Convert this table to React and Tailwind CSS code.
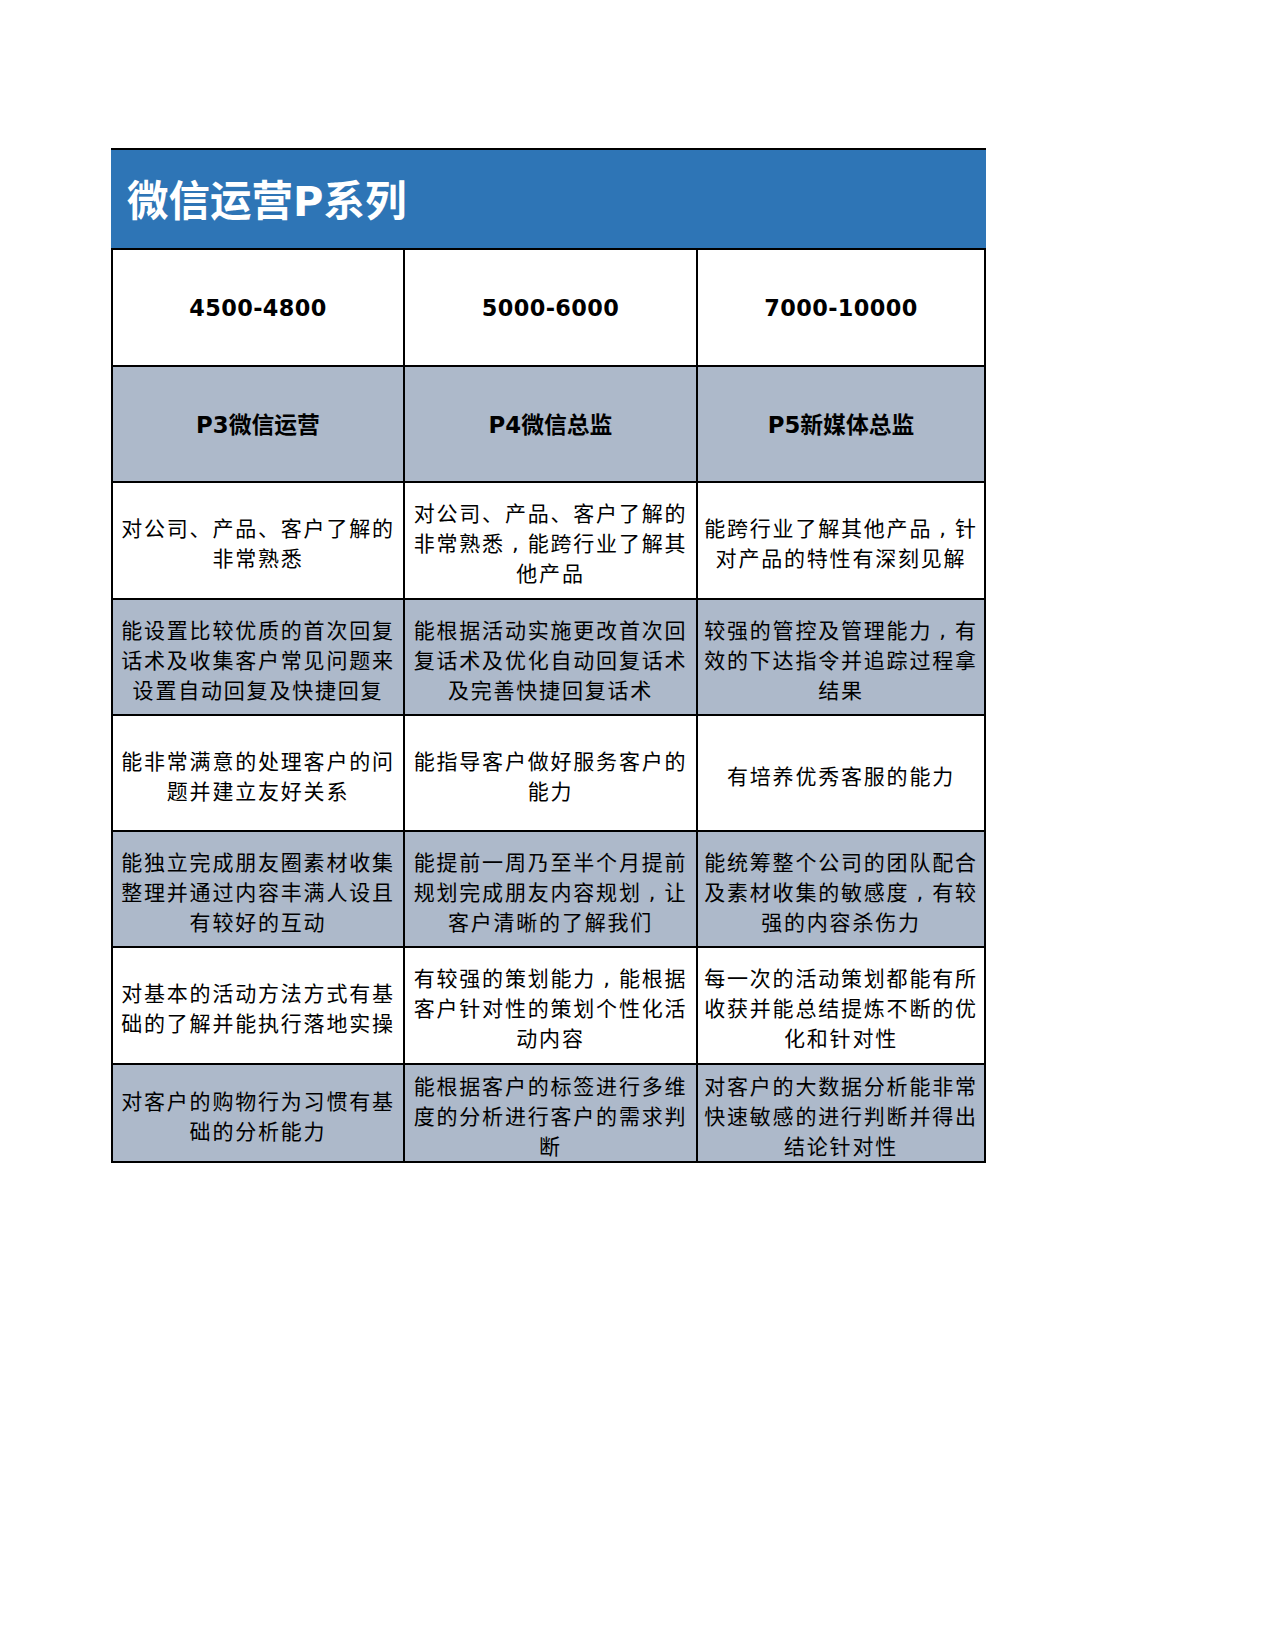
import React from "react";

const FONT = { fontFamily: '"DejaVu Sans","Noto Sans CJK SC",sans-serif' };

const salaries = ["4500-4800", "5000-6000", "7000-10000"];
const roles = ["P3微信运营", "P4微信总监", "P5新媒体总监"];

const rows = [
  [
    ["对公司、产品、客户了解的", "非常熟悉"],
    ["对公司、产品、客户了解的", "非常熟悉，能跨行业了解其", "他产品"],
    ["能跨行业了解其他产品，针", "对产品的特性有深刻见解"],
  ],
  [
    ["能设置比较优质的首次回复", "话术及收集客户常见问题来", "设置自动回复及快捷回复"],
    ["能根据活动实施更改首次回", "复话术及优化自动回复话术", "及完善快捷回复话术"],
    ["较强的管控及管理能力，有", "效的下达指令并追踪过程拿", "结果"],
  ],
  [
    ["能非常满意的处理客户的问", "题并建立友好关系"],
    ["能指导客户做好服务客户的", "能力"],
    ["有培养优秀客服的能力"],
  ],
  [
    ["能独立完成朋友圈素材收集", "整理并通过内容丰满人设且", "有较好的互动"],
    ["能提前一周乃至半个月提前", "规划完成朋友内容规划，让", "客户清晰的了解我们"],
    ["能统筹整个公司的团队配合", "及素材收集的敏感度，有较", "强的内容杀伤力"],
  ],
  [
    ["对基本的活动方法方式有基", "础的了解并能执行落地实操"],
    ["有较强的策划能力，能根据", "客户针对性的策划个性化活", "动内容"],
    ["每一次的活动策划都能有所", "收获并能总结提炼不断的优", "化和针对性"],
  ],
  [
    ["对客户的购物行为习惯有基", "础的分析能力"],
    ["能根据客户的标签进行多维", "度的分析进行客户的需求判", "断"],
    ["对客户的大数据分析能非常", "快速敏感的进行判断并得出", "结论针对性"],
  ],
];

function Line({ text }) {
  const parts = text.split("，");
  return (
    <span className="block whitespace-nowrap text-[21px] leading-[30px] tracking-[1.8px]">
      {parts.map((p, i) => (
        <React.Fragment key={i}>
          {i > 0 && <span className="inline-block w-[22.8px] text-center">,</span>}
          {p}
        </React.Fragment>
      ))}
    </span>
  );
}

function Cell({ bg, pad, children }) {
  return (
    <div className={`${bg} ${pad} flex flex-col items-center justify-center text-center text-black overflow-hidden`}>
      {children}
    </div>
  );
}

export default function App() {
  return (
    <div className="min-h-[1650px] w-[1275px] bg-white pt-[148px] pl-[111px]" style={FONT}>
      <div className="w-[875px]">
        <div className="border-t-2 border-black bg-[#2e75b6] h-[100px] flex items-center pl-[16px] pt-[5px]">
          <span className="text-white font-bold text-[41.5px] leading-none">微信运营P系列</span>
        </div>
        <div className="grid grid-cols-[290px_291px_286px] grid-rows-[115px_114px_115px_114px_114px_114px_115px_96px] gap-[2px] bg-black border-2 border-black">
          {salaries.map((s) => (
            <Cell key={s} bg="bg-white" pad="pt-[2px]">
              <span className="font-bold text-[22.4px] tracking-[0.4px]">{s}</span>
            </Cell>
          ))}
          {roles.map((r) => (
            <Cell key={r} bg="bg-[#adb9ca]" pad="pt-[2px]">
              <span className="font-bold text-[22.8px]">{r}</span>
            </Cell>
          ))}
          {rows.map((row, i) =>
            row.map((lines, j) => (
              <Cell key={`${i}-${j}`} bg={i % 2 === 0 ? "bg-white" : "bg-[#adb9ca]"} pad="pt-[7px]">
                {lines.map((l, k) => (
                  <Line key={k} text={l} />
                ))}
              </Cell>
            ))
          )}
        </div>
      </div>
    </div>
  );
}
